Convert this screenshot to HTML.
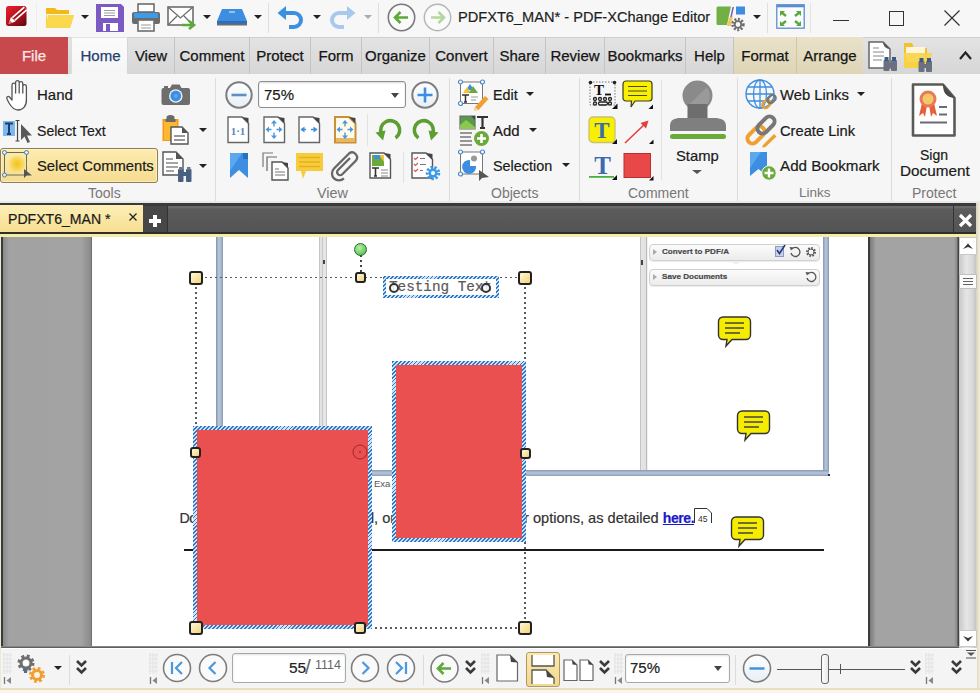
<!DOCTYPE html>
<html><head><meta charset="utf-8">
<style>
*{box-sizing:border-box}
html,body{margin:0;padding:0}
body{width:980px;height:693px;overflow:hidden;position:relative;background:#f4f4f4;font-family:"Liberation Sans",sans-serif;color:#1a1a1a}
.a{position:absolute}
.t{position:absolute;white-space:nowrap;font-size:15px;line-height:18px;-webkit-text-stroke:0.2px currentColor}
svg{position:absolute;overflow:visible}
.dd{position:absolute;width:0;height:0;border-left:4px solid transparent;border-right:4px solid transparent;border-top:4px solid #222}
.tab{position:absolute;top:37px;height:37px;border-right:1px solid #c4c4c4;font-size:15px;line-height:37px;text-align:center;color:#151515;-webkit-text-stroke:0.25px currentColor}
.gl{position:absolute;top:185px;font-size:14px;line-height:16px;color:#777;white-space:nowrap}
.sep{position:absolute;top:78px;width:1px;height:122px;background:#dadada}
</style></head><body>

<!-- TITLE BAR -->
<div class="a" style="left:0;top:0;width:980px;height:37px;background:#f7f7f7"></div>


<!-- title icons -->
<svg style="left:6px;top:6px" width="21" height="20" viewBox="0 0 21 20"><defs><linearGradient id="lg1" x1="0" y1="0" x2="0.8" y2="1"><stop offset="0" stop-color="#e8202c"/><stop offset=".55" stop-color="#b81420"/><stop offset="1" stop-color="#6a0810"/></linearGradient></defs><rect x="0" y="0" width="20.5" height="20" rx="2.5" fill="url(#lg1)"/><path d="M7.5 13 L19.5 2.5" stroke="#fff" stroke-width="5.2" stroke-linecap="butt"/><path d="M7.5 13 L19.5 2.5" stroke="#a01018" stroke-width="1.8"/><path d="M2.5 18 L5 11 L9.5 15.5 Z" fill="#fff"/><path d="M2.5 18 L4 14.5 L6 16.5 Z" fill="#8a1a1a" opacity=".6"/></svg>
<div class="a" style="left:36px;top:3px;width:1px;height:30px;background:#ededed"></div>
<svg style="left:45px;top:6px" width="30" height="23" viewBox="0 0 30 23"><path d="M1 2 L10 2 L12 4 L24 4 L24 8 L1 8 Z" fill="#f2b81c"/><path d="M1 4 L1 22 L25 22 L29 9 L6 9 L3 20 Z" fill="#f7cd3a"/><path d="M3 9 L29 9 L25 22 L0.5 22 Z" fill="#fbd94e"/></svg>
<div class="dd" style="left:81px;top:15px"></div>
<svg style="left:96px;top:4px" width="28" height="28" viewBox="0 0 28 28"><path d="M0 0 H25 L28 3 V28 H0 Z" fill="#7c5ac4"/><rect x="5" y="3" width="17" height="11" fill="#fff"/><path d="M8 6.5 H19 M8 9 H19 M8 11.5 H19" stroke="#9a9aa8" stroke-width="1"/><rect x="7" y="19" width="15" height="8" fill="#fff"/><rect x="10" y="20" width="4" height="7" fill="#7c5ac4"/></svg>
<svg style="left:131px;top:3px" width="30" height="29" viewBox="0 0 30 29"><rect x="7" y="1" width="16" height="8" fill="#fff" stroke="#6d6d6d" stroke-width="1.6"/><rect x="1" y="9" width="28" height="12" rx="2" fill="#6b6b6b"/><rect x="3" y="10" width="24" height="5" fill="#3d9be9"/><rect x="7" y="17" width="16" height="11" fill="#fff" stroke="#6d6d6d" stroke-width="1.6"/><path d="M10 22 H20 M10 25 H20" stroke="#999" stroke-width="1"/></svg>
<svg style="left:167px;top:6px" width="30" height="24" viewBox="0 0 30 24"><rect x="1" y="1" width="25" height="18" fill="#fff" stroke="#6d6d6d" stroke-width="1.6"/><path d="M1 1 L13.5 12 L26 1 M1 19 L10 10 M26 19 L17 10" fill="none" stroke="#6d6d6d" stroke-width="1.3"/><path d="M15 19 H26 M22 15 L27 19 L22 23" fill="none" stroke="#5aaa3a" stroke-width="2.6"/></svg>
<div class="dd" style="left:203px;top:15px"></div>
<svg style="left:216px;top:8px" width="32" height="18" viewBox="0 0 32 18"><path d="M6 1 H26 L31 13 H1 Z" fill="#3d8ee0"/><path d="M1 13 H31 V16 H1 Z" fill="#2a6fbf"/><rect x="1" y="15.5" width="30" height="2" fill="#6d6d6d"/><rect x="13" y="3" width="6" height="2" fill="#8cc4f2"/></svg>
<div class="dd" style="left:254px;top:15px"></div>
<div class="a" style="left:268px;top:3px;width:1px;height:30px;background:#dedede"></div>
<svg style="left:277px;top:5px" width="28" height="24" viewBox="0 0 28 24"><path d="M6 8 H17 A7 7 0 0 1 17 22 H12" fill="none" stroke="#3b91e0" stroke-width="4"/><path d="M0.5 8 L9 1 L9 15 Z" fill="#3b91e0"/></svg>
<div class="dd" style="left:313px;top:15px"></div>
<svg style="left:328px;top:5px" width="28" height="24" viewBox="0 0 28 24"><path d="M22 8 H11 A7 7 0 0 0 11 22 H16" fill="none" stroke="#a8c9ee" stroke-width="4"/><path d="M27.5 8 L19 1 L19 15 Z" fill="#a8c9ee"/></svg>
<div class="dd" style="left:364px;top:15px;border-top-color:#aaa"></div>
<div class="a" style="left:378px;top:3px;width:1px;height:30px;background:#dedede"></div>
<svg style="left:387px;top:3px" width="29" height="29" viewBox="0 0 29 29"><circle cx="14.5" cy="14.5" r="13.2" fill="#fafafa" stroke="#7a7a7a" stroke-width="1.6"/><path d="M8 14.5 H21 M13.5 9 L8 14.5 L13.5 20" fill="none" stroke="#5fa83a" stroke-width="2.6"/></svg>
<svg style="left:423px;top:3px" width="29" height="29" viewBox="0 0 29 29"><circle cx="14.5" cy="14.5" r="13.2" fill="#fafafa" stroke="#b5b5b5" stroke-width="1.4"/><path d="M8 14.5 H21 M15.5 9 L21 14.5 L15.5 20" fill="none" stroke="#b4d79c" stroke-width="2.6"/></svg>
<div class="t" style="left:458px;top:8px;font-size:14.6px;color:#1e1e1e">PDFXT6_MAN* - PDF-XChange Editor</div>
<svg style="left:716px;top:5px" width="31" height="28" viewBox="0 0 31 28"><path d="M2 1.5 H15 L11 20 H2 a1.5 1.5 0 0 1 -1.5 -1.5 V3 A1.5 1.5 0 0 1 2 1.5 Z" fill="#72b046"/><path d="M16.5 2 L18 2 L14 20 L12.5 20 Z" fill="#7a55c0"/><rect x="20" y="1.5" width="9" height="8" fill="#3d8ee0"/><path d="M13 13 L17 11 L15 21 L11 21 Z" fill="#f0c860"/><circle cx="22" cy="19.5" r="5.2" fill="none" stroke="#6d6d6d" stroke-width="3" stroke-dasharray="1.9 1.5"/><circle cx="22" cy="19.5" r="3.3" fill="none" stroke="#6d6d6d" stroke-width="1.8"/></svg>
<div class="dd" style="left:753px;top:15px"></div>
<div class="a" style="left:767px;top:3px;width:1px;height:30px;background:#dedede"></div>
<svg style="left:776px;top:4px" width="29" height="25" viewBox="0 0 29 25"><rect x="0.8" y="0.8" width="27.4" height="23.4" fill="#fbfdff" stroke="#5a8ed0" stroke-width="1.3"/><rect x="0.8" y="0.8" width="27.4" height="2.5" fill="#5a8ed0"/><path d="M5 8 L10 12 M24 8 L19 12 M5 21 L10 17 M24 21 L19 17" stroke="#5aaa3a" stroke-width="2.4"/><path d="M4 7 H9 L4 12 Z M25 7 H20 L25 12 Z M4 22 H9 L4 17 Z M25 22 H20 L25 17 Z" fill="#5aaa3a"/></svg>
<div class="a" style="left:810px;top:3px;width:1px;height:30px;background:#e3e3e3"></div>
<div class="a" style="left:833px;top:20px;width:16px;height:1px;background:#333"></div>
<div class="a" style="left:889px;top:11px;width:15px;height:15px;border:1px solid #333"></div>
<svg style="left:944px;top:10px" width="16" height="16" viewBox="0 0 16 16"><path d="M0.5 0.5 L15.5 15.5 M15.5 0.5 L0.5 15.5" stroke="#333" stroke-width="1.2"/></svg>

<!-- RIBBON TABS -->
<div class="a" style="left:0;top:37px;width:980px;height:37px;background:linear-gradient(#e3e3e3,#d6d6d6);border-top:1px solid #d0d0d0"></div>
<div class="tab" style="left:0;width:68px;background:#c8494b;color:#fbe9e9;border-right:none">File</div>
<div class="tab" style="left:71px;width:57px;background:linear-gradient(#fbfbfb,#f5f5f5);color:#22406e;height:38px;border-right:1px solid #d6d6d6;border-left:1px solid #dedede;border-top:1px solid #e2e2e2;line-height:36px;padding-left:2px">Home</div>
<div class="tab" style="left:128px;width:47px">View</div>
<div class="tab" style="left:175px;width:75px">Comment</div>
<div class="tab" style="left:250px;width:61px">Protect</div>
<div class="tab" style="left:311px;width:51px">Form</div>
<div class="tab" style="left:362px;width:68px">Organize</div>
<div class="tab" style="left:430px;width:64px">Convert</div>
<div class="tab" style="left:494px;width:52px">Share</div>
<div class="tab" style="left:546px;width:59px">Review</div>
<div class="tab" style="left:605px;width:81px">Bookmarks</div>
<div class="tab" style="left:686px;width:48px">Help</div>
<div class="a" style="left:734px;top:37px;width:129px;height:37px;background:linear-gradient(#e9e2c9,#ded5b6)"></div>
<div class="tab" style="left:734px;width:63px;border-right:1px solid #cfc6a6">Format</div>
<div class="tab" style="left:797px;width:66px;border-right:none">Arrange</div>


<!-- tab row right icons -->
<svg style="left:868px;top:41px" width="32" height="31" viewBox="0 0 32 31"><path d="M1 1 H15 L22 8 V27 H1 Z" fill="#fff" stroke="#666" stroke-width="1.5"/><path d="M15 1 C15 5 18 8 22 8 Z" fill="#555"/><path d="M5 7 H11 M5 11 H16 M5 15 H16 M5 19 H14" stroke="#888" stroke-width="1.2"/><rect x="15.5" y="19" width="6" height="11" rx="1" fill="#6a7080"/><rect x="23" y="19" width="6" height="11" rx="1" fill="#6a7080"/><rect x="20" y="22" width="4" height="4" fill="#6a7080"/><rect x="16.5" y="16" width="4" height="4" fill="#3a5a8a"/><rect x="24" y="16" width="4" height="4" fill="#3a5a8a"/></svg>
<svg style="left:903px;top:42px" width="32" height="30" viewBox="0 0 32 30"><path d="M1 3 L1 26 L24 26 L24 6 L11 6 L9 1 L1 1 Z" fill="#f2c030"/><rect x="3" y="5" width="19" height="15" fill="#fff6d8"/><path d="M1 11 H29 L25 26 H1 Z" fill="#f8d448" opacity=".9"/><rect x="15.5" y="19" width="6" height="11" rx="1" fill="#6a7080"/><rect x="23" y="19" width="6" height="11" rx="1" fill="#6a7080"/><rect x="20" y="22" width="4" height="4" fill="#6a7080"/><rect x="16.5" y="16" width="4" height="4" fill="#3a5a8a"/><rect x="24" y="16" width="4" height="4" fill="#3a5a8a"/></svg>
<svg style="left:959px;top:50px" width="13" height="10" viewBox="0 0 13 10"><path d="M1 9 L6.5 2.5 L12 9" fill="none" stroke="#222" stroke-width="2.2"/></svg>

<!-- RIBBON BODY -->
<div class="a" style="left:0;top:74px;width:980px;height:130px;background:#f6f6f6"></div>


<!-- ribbon separators -->
<div class="a" style="left:215px;top:78px;width:1px;height:124px;background:#dcdcdc"></div>
<div class="a" style="left:449px;top:78px;width:1px;height:124px;background:#dcdcdc"></div>
<div class="a" style="left:579px;top:78px;width:1px;height:124px;background:#dcdcdc"></div>
<div class="a" style="left:737px;top:78px;width:1px;height:124px;background:#dcdcdc"></div>
<div class="a" style="left:891px;top:78px;width:1px;height:124px;background:#dcdcdc"></div>
<div class="a" style="left:367px;top:114px;width:1px;height:32px;background:#e2e2e2"></div>
<div class="a" style="left:403px;top:152px;width:1px;height:31px;background:#e2e2e2"></div>
<div class="a" style="left:661px;top:80px;width:1px;height:100px;background:#e2e2e2"></div>
<div class="a" style="left:0;top:201px;width:980px;height:2px;background:#e9e9e9"></div>

<!-- group labels -->
<div class="gl" style="left:88px;top:185px;font-size:14px">Tools</div>
<div class="gl" style="left:317px;top:185px;font-size:14.4px">View</div>
<div class="gl" style="left:491px;top:185px;font-size:14px">Objects</div>
<div class="gl" style="left:628px;top:185px;font-size:14px">Comment</div>
<div class="gl" style="left:799px;top:185px;font-size:13.5px">Links</div>
<div class="gl" style="left:912px;top:185px;font-size:14px">Protect</div>

<!-- tools -->
<div class="a" style="left:0;top:148px;width:158px;height:35px;border:1px solid #8f7c52;border-radius:3px;background:linear-gradient(#fcecb0,#f6dc90);box-shadow:inset 0 0 0 1px rgba(255,250,220,.6)"></div>
<div class="t" style="left:37px;top:86px;font-size:15px">Hand</div>
<div class="t" style="left:37px;top:122px;font-size:14.1px">Select Text</div>
<div class="t" style="left:37px;top:157px;font-size:14.8px">Select Comments</div>

<!-- view: zoom box -->
<div class="a" style="left:258px;top:81px;width:148px;height:27px;border:1px solid #8e8e8e;border-radius:3px;background:#fff;box-shadow:inset 0 1px 2px rgba(0,0,0,.15)"></div>
<div class="t" style="left:264px;top:86px;font-size:15px">75%</div>
<div class="dd" style="left:391px;top:93px;border-top-color:#444;border-left-width:4.5px;border-right-width:4.5px;border-top-width:5px"></div>

<!-- objects -->
<div class="t" style="left:493px;top:86px;font-size:14.3px">Edit</div>
<div class="dd" style="left:526px;top:92px"></div>
<div class="t" style="left:493px;top:122px;font-size:15px">Add</div>
<div class="dd" style="left:529px;top:128px"></div>
<div class="t" style="left:493px;top:157px;font-size:14.4px">Selection</div>
<div class="dd" style="left:562px;top:163px"></div>

<!-- comment -->
<div class="t" style="left:676px;top:147px;font-size:14.8px">Stamp</div>
<div class="dd" style="left:692px;top:170px;border-top-color:#555;border-left-width:5px;border-right-width:5px"></div>

<!-- links -->
<div class="t" style="left:780px;top:86px;font-size:14.8px">Web Links</div>
<div class="dd" style="left:857px;top:92px"></div>
<div class="t" style="left:780px;top:122px;font-size:14.7px">Create Link</div>
<div class="t" style="left:780px;top:157px;font-size:15.2px">Add Bookmark</div>

<!-- protect -->
<div class="t" style="left:920px;top:146px;font-size:14px">Sign</div>
<div class="t" style="left:900px;top:162px;font-size:15.3px">Document</div>


<!-- ribbon icons: tools -->
<svg style="left:6px;top:79px" width="25" height="32" viewBox="0 0 25 32"><path d="M6 17 V6 a1.8 1.8 0 0 1 3.6 0 V14 V3.5 a1.8 1.8 0 0 1 3.6 0 V14 V4.5 a1.8 1.8 0 0 1 3.6 0 V14 V7.5 a1.8 1.8 0 0 1 3.6 0 V20 C20.8 27 17 31 12 31 C8 31 6 29 3 24 L1 20 C0 18 2 16.5 3.5 18 L6 21 Z" fill="#fff" stroke="#555" stroke-width="1.3" stroke-linejoin="round"/></svg>
<svg style="left:2px;top:120px" width="32" height="24" viewBox="0 0 32 24"><rect x="1" y="1" width="12" height="15" fill="#7db8ec"/><path d="M3 3.5 H11 M7 3.5 V14 M5 14 H9" stroke="#1f3f6a" stroke-width="2"/><path d="M15.5 0.5 V21 M13.5 0.5 H17.5 M13.5 21 H17.5" stroke="#444" stroke-width="1.2"/><path d="M19 4 L19 20 L22.5 16.5 L25.5 23 L28 22 L25 15.5 L30 15.5 Z" fill="#5a5a5a"/></svg>
<svg style="left:2px;top:150px" width="31" height="29" viewBox="0 0 31 29"><defs><radialGradient id="yg"><stop offset="0" stop-color="#f3c21a"/><stop offset=".7" stop-color="#f8dc6a"/><stop offset="1" stop-color="#f8e6a0" stop-opacity="0"/></radialGradient></defs><rect x="2.5" y="2.5" width="22" height="22.5" fill="none" stroke="#6a6a5a" stroke-width="1"/><circle cx="15" cy="14" r="10" fill="url(#yg)"/><circle cx="2.5" cy="2.5" r="2" fill="#dfeefa" stroke="#4a7fb0" stroke-width="1"/><circle cx="24.5" cy="2.5" r="2" fill="#dfeefa" stroke="#4a7fb0" stroke-width="1"/><circle cx="2.5" cy="25" r="2" fill="#dfeefa" stroke="#4a7fb0" stroke-width="1"/><path d="M22 19 L22 28 L24.5 25.5 L30 25.5 Z" fill="#555"/></svg>
<svg style="left:161px;top:84px" width="30" height="22" viewBox="0 0 30 22"><rect x="0.5" y="4" width="28.5" height="17" rx="2" fill="#6e6e6e"/><path d="M9 4 L11 0.5 H18.5 L20.5 4 Z" fill="#6e6e6e"/><rect x="3" y="2" width="4" height="3" fill="#6e6e6e"/><circle cx="14.8" cy="12" r="6.8" fill="#e8f3fc"/><circle cx="14.8" cy="12" r="5.4" fill="#3d8ee0"/><circle cx="14.8" cy="12" r="2" fill="#5ba8ef"/></svg>
<svg style="left:162px;top:115px" width="28" height="30" viewBox="0 0 28 30"><rect x="0.5" y="4" width="16" height="22" fill="#f39a18"/><rect x="2" y="6" width="13" height="19" fill="#fbb830"/><path d="M4.5 4.5 V2.5 a4 2.5 0 0 1 8 0 V4.5 Z" fill="#6a6a6a"/><rect x="3.5" y="4" width="10" height="3" fill="#6a6a6a"/><path d="M9 12 H20 L26 18 V29 H9 Z" fill="#fff" stroke="#555" stroke-width="1.4"/><path d="M20 12 V18 H26" fill="#555"/><path d="M12 21 H23 M12 25 H23" stroke="#777" stroke-width="1.4"/></svg>
<div class="dd" style="left:199px;top:128px"></div>
<svg style="left:162px;top:151px" width="31" height="32" viewBox="0 0 31 32"><path d="M1 1 H14 L21 8 V24 H1 Z" fill="#fff" stroke="#555" stroke-width="1.4"/><path d="M14 1 V8 H21" fill="#555"/><path d="M4 8 H11 M4 12 H16 M4 16 H16 M4 20 H12" stroke="#888" stroke-width="1.3"/><rect x="16" y="18" width="5.5" height="13" rx="1" fill="#4a6080"/><rect x="24" y="18" width="5.5" height="13" rx="1" fill="#4a6080"/><rect x="20" y="21" width="5" height="4" fill="#4a6080"/><rect x="17" y="16" width="3.5" height="3" fill="#6a7a90"/><rect x="25" y="16" width="3.5" height="3" fill="#6a7a90"/></svg>
<div class="dd" style="left:199px;top:164px"></div>

<!-- view icons -->
<svg style="left:225px;top:81px" width="28" height="28" viewBox="0 0 28 28"><defs><linearGradient id="cg" x1="0" y1="0" x2="0" y2="1"><stop offset="0" stop-color="#ffffff"/><stop offset="1" stop-color="#e6eef5"/></linearGradient></defs><circle cx="14" cy="14" r="12.7" fill="url(#cg)" stroke="#7d7d7d" stroke-width="2"/><path d="M6.5 14 H21.5" stroke="#5d8fbf" stroke-width="2.6"/></svg>
<svg style="left:411px;top:81px" width="28" height="28" viewBox="0 0 28 28"><circle cx="14" cy="14" r="12.7" fill="url(#cg)" stroke="#7d7d7d" stroke-width="2"/><path d="M6.5 14 H21.5 M14 6.5 V21.5" stroke="#3d8ee0" stroke-width="2.6"/></svg>
<svg style="left:227px;top:116px" width="23" height="28" viewBox="0 0 23 28"><path d="M1 1 H15 L21.5 7.5 V26.5 H1 Z" fill="#fff" stroke="#666" stroke-width="1.4"/><path d="M15 1 L21.5 7.5 L21.5 2 Z" fill="#444"/><text x="11" y="18.5" font-size="11" font-family="Liberation Serif" fill="#5a88b8" text-anchor="middle" font-weight="bold">1·1</text></svg>
<svg style="left:263px;top:116px" width="23" height="28" viewBox="0 0 23 28"><path d="M1 1 H15 L21.5 7.5 V26.5 H1 Z" fill="#fff" stroke="#666" stroke-width="1.4"/><path d="M15 1 L21.5 7.5 L21.5 2 Z" fill="#444"/><path d="M11 6 V10.5 M11 16.5 V21 M4 13.5 H8.5 M13.5 13.5 H18" stroke="#4a98e0" stroke-width="1.4"/><path d="M11 4 L8 7.5 H14 Z M11 23 L8 19.5 H14 Z M2.5 13.5 L6 10.5 V16.5 Z M19.5 13.5 L16 10.5 V16.5 Z" fill="#4a98e0"/></svg>
<svg style="left:298px;top:116px" width="23" height="28" viewBox="0 0 23 28"><path d="M1 1 H15 L21.5 7.5 V26.5 H1 Z" fill="#fff" stroke="#666" stroke-width="1.4"/><path d="M15 1 L21.5 7.5 L21.5 2 Z" fill="#444"/><path d="M3 13.5 H8 M13 13.5 H19" stroke="#3d8ee0" stroke-width="1.3"/><path d="M2.5 13.5 L6.5 10.5 V16.5 Z M19.5 13.5 L15.5 10.5 V16.5 Z" fill="#3d8ee0"/></svg>
<svg style="left:334px;top:116px" width="23" height="28" viewBox="0 0 23 28"><path d="M1 1 H15 L21.5 7.5 V26.5 H1 Z" fill="#fffbe8" stroke="#c8903a" stroke-width="2"/><path d="M15 1 L21.5 7.5 L21.5 2 Z" fill="#444"/><rect x="2" y="22" width="19" height="4" fill="#e8b860"/><path d="M11 6 V10.5 M11 16.5 V21 M4 13.5 H8.5 M13.5 13.5 H18" stroke="#4a98e0" stroke-width="1.4"/><path d="M11 4 L8 7.5 H14 Z M11 23 L8 19.5 H14 Z M2.5 13.5 L6 10.5 V16.5 Z M19.5 13.5 L16 10.5 V16.5 Z" fill="#4a98e0"/></svg>
<svg style="left:374px;top:118px" width="30" height="24" viewBox="0 0 30 24"><path d="M21.6 20 A9.5 9.5 0 1 0 7.5 16" fill="none" stroke="#5c9e32" stroke-width="3.6"/><path d="M1.5 14.5 L11.5 12.5 L9 22.5 Z" fill="#5c9e32"/></svg>
<svg style="left:410px;top:118px" width="30" height="24" viewBox="0 0 30 24"><path d="M8.4 20 A9.5 9.5 0 1 1 22.5 16" fill="none" stroke="#5c9e32" stroke-width="3.6"/><path d="M28.5 14.5 L18.5 12.5 L21 22.5 Z" fill="#5c9e32"/></svg>
<svg style="left:230px;top:153px" width="19" height="26" viewBox="0 0 19 26"><path d="M0 0 H18 V25 L9 17 L0 25 Z" fill="#3d8ee0"/><path d="M0 0 H12 L0 18 Z" fill="#5aa8ef"/><rect x="13" y="0" width="5" height="6" fill="#2a6fbf"/></svg>
<svg style="left:262px;top:152px" width="28" height="29" viewBox="0 0 28 29"><path d="M1 15 V1 H11" fill="none" stroke="#777" stroke-width="1.2"/><path d="M5 19 V5 H15" fill="none" stroke="#666" stroke-width="1.2"/><path d="M10 10 H20 L26 16 V28 H10 Z" fill="#fff" stroke="#555" stroke-width="1.4"/><path d="M20 10 L26 16 V11 Z" fill="#444"/><path d="M13 17 H17 M13 20 H23 M13 23 H23" stroke="#777" stroke-width="1.2"/></svg>
<svg style="left:296px;top:153px" width="28" height="27" viewBox="0 0 28 27"><path d="M0 0 H27 V18 H10 L7 26 L5 18 H0 Z" fill="#f6cc3c"/><path d="M3 4.5 H24 M3 9 H24 M3 13.5 H24" stroke="#e8b020" stroke-width="1.5"/></svg>
<svg style="left:330px;top:152px" width="31" height="27" viewBox="0 0 31 27"><path d="M20 7 L8 19 a3 3 0 0 0 4.3 4.3 L26 9.5 a5 5 0 0 0 -7 -7 L4 17.5 a7 7 0 0 0 9.9 9.9" fill="none" stroke="#666" stroke-width="2.3" transform="translate(0,-1)"/></svg>
<svg style="left:369px;top:152px" width="23" height="27" viewBox="0 0 23 27"><path d="M1 1 H15 L21.5 7.5 V26 H1 Z" fill="#fff" stroke="#555" stroke-width="1.4"/><path d="M15 1 L21.5 7.5 V2 Z" fill="#444"/><rect x="3" y="3" width="12" height="11" fill="#f3c23a"/><path d="M3 3 H10 L15 10 V14 H3 Z" fill="#6aaa3a"/><rect x="5" y="3" width="6" height="4" fill="#3d8ee0"/><path d="M3 16 H10 M6.5 16 V24 M5 24 H8" stroke="#333" stroke-width="1.6"/><path d="M12 18 H19 M12 21 H19 M12 24 H19" stroke="#888" stroke-width="1"/></svg>
<svg style="left:411px;top:152px" width="30" height="29" viewBox="0 0 30 29"><path d="M1 1 H15 L21.5 7.5 V26 H1 Z" fill="#fff" stroke="#555" stroke-width="1.4"/><path d="M15 1 L21.5 7.5 V2 Z" fill="#444"/><path d="M3 6 L4.5 7.5 L7 5 M3 12 L4.5 13.5 L7 11 M3 18 L4.5 19.5 L7 17" fill="none" stroke="#e05050" stroke-width="1.2"/><path d="M9 6.5 H14 M9 12.5 H15 M9 18.5 H12" stroke="#777" stroke-width="1.2"/><circle cx="22" cy="21" r="5.5" fill="none" stroke="#3d9be9" stroke-width="3.5" stroke-dasharray="2.2 1.6"/><circle cx="22" cy="21" r="4.5" fill="#3d9be9"/><circle cx="22" cy="21" r="2" fill="#fff"/></svg>


<!-- objects icons -->
<svg style="left:458px;top:80px" width="32" height="31" viewBox="0 0 32 31"><rect x="2.5" y="2" width="22" height="21.5" fill="#fff" stroke="#777" stroke-width="1"/><path d="M8 10 L12 4 L16 10 Z" fill="#3d8ee0"/><path d="M5 13 L9 7 L13 13 Z" fill="#f3c23a"/><path d="M11 13 L15 6 L20 13 Z" fill="#6aaa3a"/><path d="M4 15 H11 M7.5 15 V22 M6 22 H9" stroke="#333" stroke-width="1.5"/><path d="M13 17 H20 M13 20 H18" stroke="#999" stroke-width="1"/><circle cx="2.5" cy="2" r="2" fill="#fff" stroke="#4a88c4" stroke-width="1.2"/><circle cx="24.5" cy="2" r="2" fill="#fff" stroke="#4a88c4" stroke-width="1.2"/><circle cx="2.5" cy="23.5" r="2" fill="#fff" stroke="#4a88c4" stroke-width="1.2"/><path d="M17 27 L27 16 L30.5 19 L20.5 30 L16 30.5 Z" fill="#f0a030"/><path d="M16 30.5 L17 27 L20.5 30 Z" fill="#f8d8a0"/></svg>
<svg style="left:459px;top:115px" width="31" height="32" viewBox="0 0 31 32"><rect x="1" y="1" width="15" height="13" fill="#5a9a4a"/><path d="M1 1 H16 V14 H1 Z" fill="none" stroke="#6a6a6a" stroke-width="1.2"/><path d="M1 10 L7 5 L16 12 V14 H1 Z" fill="#8cc850"/><path d="M12 1 L16 1 L16 5 Z" fill="#444"/><path d="M18 2 H29 M23.5 2 V13 M21 13 H26" stroke="#333" stroke-width="2.2"/><path d="M1 18 H13 M1 22 H12 M1 26 H13 M1 30 H13" stroke="#777" stroke-width="1.4"/><circle cx="22.5" cy="23.5" r="7.5" fill="#6aaa3a"/><path d="M22.5 19 V28 M18 23.5 H27" stroke="#fff" stroke-width="2.6"/></svg>
<svg style="left:458px;top:150px" width="32" height="32" viewBox="0 0 32 32"><rect x="2.5" y="2" width="22" height="22" fill="#fff" stroke="#777" stroke-width="1"/><circle cx="16" cy="8.5" r="3" fill="#999"/><path d="M12 10 A7 7 0 1 0 18 16 L12 16 Z" fill="#3d8ee0"/><circle cx="2.5" cy="2" r="2" fill="#fff" stroke="#4a88c4" stroke-width="1.2"/><circle cx="24.5" cy="2" r="2" fill="#fff" stroke="#4a88c4" stroke-width="1.2"/><circle cx="2.5" cy="24" r="2" fill="#fff" stroke="#4a88c4" stroke-width="1.2"/><path d="M21 20 L21 31 L24 28 L31 27 Z" fill="#555"/></svg>

<!-- comment icons -->
<svg style="left:589px;top:81px" width="29" height="29" viewBox="0 0 29 29"><rect x="1" y="1" width="25" height="23" fill="none" stroke="#666" stroke-width="0.9" stroke-dasharray="1.5 1.5"/><circle cx="1.5" cy="1.5" r="1.8" fill="#222"/><circle cx="25.5" cy="1.5" r="1.8" fill="#222"/><text x="10" y="14" font-family="Liberation Serif" font-weight="bold" font-size="15" text-anchor="middle" fill="#111">T</text><path d="M16 13.5 H22" stroke="#111" stroke-width="1.8"/><g fill="none" stroke="#222" stroke-width="1.3"><circle cx="6" cy="18" r="1.5"/><circle cx="11" cy="18" r="1.5"/><circle cx="16" cy="18" r="1.5"/><circle cx="21" cy="18" r="1.5"/><circle cx="6" cy="22.5" r="1.5"/><rect x="9.5" y="21" width="9" height="3" rx="1.5"/><circle cx="21" cy="22.5" r="1.5"/></g><path d="M23 28 L28.5 28 L28.5 22.5 Z" fill="#111"/></svg>
<svg style="left:622px;top:80px" width="32" height="30" viewBox="0 0 32 30"><path d="M4 1 H27 a3 3 0 0 1 3 3 V18 a3 3 0 0 1 -3 3 H13 L9 27 L9.5 21 H4 a3 3 0 0 1 -3 -3 V4 a3 3 0 0 1 3 -3 Z" fill="#f8f000" stroke="#3a3a20" stroke-width="1.2"/><path d="M6 6.5 H25 M6 11 H25 M6 15.5 H25" stroke="#4a4a20" stroke-width="1.2"/><path d="M26.5 29 L31 29 L31 24.5 Z" fill="#111"/></svg>
<svg style="left:588px;top:116px" width="30" height="29" viewBox="0 0 30 29"><rect x="1" y="1" width="26" height="25.5" rx="4" fill="#f8f000" stroke="#c9c070" stroke-width="1.3"/><text x="14" y="22" font-family="Liberation Serif" font-weight="bold" font-size="23" text-anchor="middle" fill="#3a6ab0">T</text><path d="M24 28 L29 28 L29 23 Z" fill="#111"/></svg>
<svg style="left:623px;top:119px" width="31" height="26" viewBox="0 0 31 26"><path d="M2 24 L23 4" stroke="#e04040" stroke-width="1.6"/><path d="M25.5 1.5 L17.5 4 L23 9.5 Z" fill="#e04040"/><path d="M26 25 L30.5 25 L30.5 20.5 Z" fill="#111"/></svg>
<svg style="left:588px;top:154px" width="30" height="27" viewBox="0 0 30 27"><text x="14.5" y="20" font-family="Liberation Serif" font-weight="bold" font-size="25" text-anchor="middle" fill="#3a6ab0">T</text><rect x="1" y="22" width="25" height="1.8" fill="#4ab040"/><path d="M24 26 L29 26 L29 21 Z" fill="#111"/></svg>
<svg style="left:623px;top:153px" width="31" height="28" viewBox="0 0 31 28"><rect x="1" y="0.5" width="26.5" height="24" fill="#e84848" stroke="#b83030" stroke-width="1"/><path d="M26 27.5 L30.5 27.5 L30.5 23 Z" fill="#111"/></svg>
<svg style="left:669px;top:80px" width="58" height="60" viewBox="0 0 58 60"><circle cx="28.5" cy="15.5" r="15" fill="#8a8a8a"/><path d="M18.5 26 L38 7 A15 15 0 0 1 28.5 30.5 A15 15 0 0 1 18.5 26 Z" fill="#9a9a9a"/><rect x="18.5" y="24" width="20" height="15" fill="#6e6e6e"/><path d="M1 51 V46 C1 40 5 38 12 38 H45 C52 38 57 40 57 46 V51 Z" fill="#7f7f7f"/><rect x="1" y="54" width="56" height="5" rx="2.5" fill="#6aaa3a"/></svg>

<!-- links icons -->
<svg style="left:745px;top:79px" width="32" height="32" viewBox="0 0 32 32"><circle cx="15" cy="15" r="14" fill="none" stroke="#3d8ee0" stroke-width="1.4"/><ellipse cx="15" cy="15" rx="6.5" ry="14" fill="none" stroke="#3d8ee0" stroke-width="1.3"/><path d="M15 1 V29 M1 15 H29 M3 8 H27 M3 22 H27" stroke="#3d8ee0" stroke-width="1.3"/><rect x="17" y="22" width="9" height="6" rx="3" transform="rotate(-45 21.5 25)" fill="none" stroke="#e8a030" stroke-width="2.5"/><rect x="22" y="17" width="9" height="6" rx="3" transform="rotate(-45 26.5 20)" fill="none" stroke="#777" stroke-width="2.5"/></svg>
<svg style="left:745px;top:115px" width="32" height="32" viewBox="0 0 32 32"><rect x="1" y="15" width="20" height="10" rx="5" transform="rotate(-45 11 20)" fill="none" stroke="#f0a030" stroke-width="4"/><rect x="11" y="5" width="20" height="10" rx="5" transform="rotate(-45 21 10)" fill="none" stroke="#777" stroke-width="4"/><path d="M18 30 L29 19 L31.5 21.5 L20.5 32 L17 32.5 Z" fill="#f0a030"/></svg>
<svg style="left:749px;top:152px" width="28" height="30" viewBox="0 0 28 30"><path d="M1 0 H18 V24 L9.5 17 L1 24 Z" fill="#3d8ee0"/><path d="M1 0 H12 L1 16 Z" fill="#5aa8ef"/><circle cx="20" cy="21" r="7.2" fill="#6aaa3a" stroke="#f4f4f4" stroke-width="1"/><path d="M20 16.5 V25.5 M15.5 21 H24.5" stroke="#fff" stroke-width="2.4"/></svg>

<!-- protect icon -->
<svg style="left:911px;top:83px" width="45" height="54" viewBox="0 0 45 54"><path d="M2 1.5 H32 L43.5 15 V52.5 H2 Z" fill="#fff" stroke="#5a5a5a" stroke-width="2.6" stroke-linejoin="round"/><path d="M32 1.5 C32 10 35 14 43.5 15 Z" fill="#4a4a4a"/><path d="M11 20 L8 33 L12 30 L14 34 L16 22 Z M18 22 L20 34 L22 30 L26 33 L23 20 Z" fill="#e8603a"/><circle cx="17" cy="16" r="8.5" fill="#e87a5a"/><circle cx="17" cy="16" r="5.5" fill="#f3c868"/><path d="M28 24 H36 M28 31.5 H36 M9 39.5 H36" stroke="#6a6a7a" stroke-width="2.2"/></svg>

<!-- DOC TAB BAR -->
<div class="a" style="left:0;top:203px;width:980px;height:31px;background:#3a3a3a"></div>
<div class="a" style="left:0;top:206px;width:977px;height:26px;background:linear-gradient(#6a6a6a 0,#6a6a6a 1.5px,#5c5c5c 3px,#575757 60%,#545454)"></div>
<div class="a" style="left:143px;top:206px;width:25px;height:27px;background:#474747"></div>
<div class="a" style="left:167px;top:206px;width:1px;height:27px;background:#333"></div>
<div class="a" style="left:953px;top:206px;width:1px;height:27px;background:#333"></div>
<div class="a" style="left:0;top:205px;width:143px;height:30px;background:linear-gradient(#fcefb8,#f6dd8c)"></div>
<div class="t" style="left:8px;top:210px;font-size:14.1px;color:#1a1a1a;line-height:18px">PDFXT6_MAN *</div>
<svg style="left:128.5px;top:212.5px" width="8" height="8" viewBox="0 0 8 8"><path d="M0.5 0.5 L7.5 7.5 M7.5 0.5 L0.5 7.5" stroke="#222" stroke-width="1.3"/></svg>
<svg style="left:148px;top:214px" width="14" height="14" viewBox="0 0 14 14"><path d="M7 1 V13 M1 7 H13" stroke="#fff" stroke-width="4"/></svg>
<svg style="left:958px;top:213px" width="15" height="15" viewBox="0 0 15 15"><path d="M2 2 L13 13 M13 2 L2 13" stroke="#fff" stroke-width="3.2"/></svg>
<div class="a" style="left:0;top:232px;width:980px;height:2px;background:#2e2e2e"></div><div class="a" style="left:0;top:234px;width:980px;height:3px;background:#f3eda8"></div>
<div class="a" style="left:976px;top:203px;width:4px;height:490px;background:linear-gradient(90deg,#d8d2b8,#f3efdd)"></div>
<div class="a" style="left:0;top:237px;width:1px;height:456px;background:#efe9d2"></div>

<!-- DOC AREA -->
<div class="a" style="left:1px;top:237px;width:91px;height:411px;background:linear-gradient(90deg,#3a3a3a 0,#3a3a3a 2px,#8a8a8a 2px,#a2a2a2 8px,#a3a3a3 80px,#8a8a8a 90px,#555 91px)"></div>
<div class="a" style="left:868px;top:237px;width:91px;height:411px;background:linear-gradient(90deg,#3a3a3a 0,#3a3a3a 1.5px,#7a7a7a 2px,#a3a3a3 8px,#a3a3a3 86px,#8a8a8a 89px,#444 90px)"></div>
<div class="a" style="left:92px;top:237px;width:776px;height:410px;background:#fff"></div>
<div class="a" style="left:1px;top:646px;width:958px;height:2px;background:linear-gradient(#9a9a9a,#4a4a4a)"></div>
<!-- scrollbar -->
<div class="a" style="left:959px;top:237px;width:17px;height:411px;background:linear-gradient(90deg,#c8c8c8,#e6e6e6 45%,#d8d8d8 80%,#c4c4c4)"></div>
<div class="a" style="left:959px;top:237px;width:18px;height:18px;background:#fff;border:1px solid #c8c8c8"></div>
<svg style="left:962px;top:242px" width="12" height="8" viewBox="0 0 12 8"><path d="M1 7 L6 1.5 L11 7 L6 5 Z" fill="#3a3a3a"/></svg>
<div class="a" style="left:959px;top:274px;width:18px;height:15px;background:#fafafa;border:1px solid #c0c0c0"></div>
<div class="a" style="left:963px;top:278px;width:10px;height:7px;border-top:1px solid #666;border-bottom:1px solid #666"></div>
<div class="a" style="left:963px;top:281px;width:10px;height:1px;background:#666"></div>
<div class="a" style="left:959px;top:630px;width:18px;height:17px;background:#fff;border:1px solid #c8c8c8"></div>
<svg style="left:962px;top:635px" width="12" height="8" viewBox="0 0 12 8"><path d="M1 1 L6 6.5 L11 1 L6 3 Z" fill="#3a3a3a"/></svg>


<!-- PAGE CONTENT -->

<!-- embedded screenshot frame -->
<div class="a" style="left:216px;top:237px;width:7px;height:239px;background:linear-gradient(90deg,#7f93ad,#b9c8dc 40%,#a9bad0 70%,#8799b2)"></div>
<div class="a" style="left:823px;top:237px;width:6px;height:239px;background:linear-gradient(90deg,#8799b2,#b9c8dc 50%,#8799b2)"></div>
<div class="a" style="left:216px;top:470px;width:613px;height:6px;background:linear-gradient(#8799b2,#b9c8dc 50%,#8c9eb6)"></div>
<div class="a" style="left:828px;top:474px;width:2px;height:2px;background:#333"></div>
<div class="a" style="left:319px;top:237px;width:8px;height:233px;background:linear-gradient(90deg,#c4c4c4 0,#c4c4c4 1px,#e2e2e2 1px,#e2e2e2 3px,#c8c8c8 3px,#c8c8c8 4px,#e6e6e6 4px,#e6e6e6 7px,#c4c4c4 7px)"></div>
<div class="a" style="left:323px;top:260px;width:2px;height:4px;background:#444"></div>
<div class="a" style="left:640px;top:237px;width:8px;height:233px;background:linear-gradient(90deg,#c4c4c4 0,#c4c4c4 1px,#e6e6e6 1px,#e0e0e0 6px,#bdbdbd 6px,#bdbdbd 7px,#f0f0f0 7px)"></div>
<div class="a" style="left:641px;top:260px;width:2px;height:5px;background:#444"></div>
<!-- panel items -->
<div class="a" style="left:649px;top:244px;width:171px;height:17px;border:1px solid #d0d0d0;border-radius:4px;background:linear-gradient(#fbfbfb,#ececec);box-shadow:0 1px 1px rgba(0,0,0,.08)"></div>
<div class="dd" style="left:653px;top:249px;border-top:3.5px solid transparent;border-bottom:3.5px solid transparent;border-left:4px solid #aaa;border-right:none"></div>
<div class="t" style="left:662px;top:245px;font-size:8.1px;line-height:14px;font-weight:bold;color:#484848">Convert to PDF/A</div>
<div class="a" style="left:775px;top:246px;width:9px;height:11px;background:#c6d0e6;border:1px solid #8a9ac0"></div>
<svg style="left:775px;top:244px" width="12" height="12" viewBox="0 0 12 12"><path d="M2 6 L4.5 9.5 L10 1" fill="none" stroke="#2a3a7a" stroke-width="1.6"/></svg>
<svg style="left:789px;top:246px" width="12" height="12" viewBox="0 0 12 12"><path d="M3 3 A4.5 4.5 0 1 1 2 7" fill="none" stroke="#555" stroke-width="1.3"/><path d="M0.5 1 L4.5 1.5 L2 4.5 Z" fill="#555"/></svg>
<svg style="left:805px;top:246px" width="12" height="12" viewBox="0 0 12 12"><circle cx="6" cy="6" r="4" fill="none" stroke="#555" stroke-width="2" stroke-dasharray="1.6 1.5"/><circle cx="6" cy="6" r="3" fill="none" stroke="#555" stroke-width="1"/></svg>
<div class="dd" style="left:731px;top:261px;border-top:4px solid #eee;border-left-width:5px;border-right-width:5px"></div>
<div class="a" style="left:649px;top:269px;width:171px;height:17px;border:1px solid #d0d0d0;border-radius:4px;background:linear-gradient(#fbfbfb,#ececec);box-shadow:0 1px 1px rgba(0,0,0,.08)"></div>
<div class="dd" style="left:653px;top:274px;border-top:3.5px solid transparent;border-bottom:3.5px solid transparent;border-left:4px solid #aaa;border-right:none"></div>
<div class="t" style="left:662px;top:270px;font-size:8.1px;line-height:14px;font-weight:bold;color:#484848">Save Documents</div>
<svg style="left:805px;top:271px" width="12" height="12" viewBox="0 0 12 12"><path d="M3 3 A4.5 4.5 0 1 1 2 7" fill="none" stroke="#555" stroke-width="1.3"/><path d="M0.5 1 L4.5 1.5 L2 4.5 Z" fill="#555"/></svg>
<div class="t" style="left:374px;top:478px;font-size:9.5px;line-height:11px;color:#555;-webkit-text-stroke:0">Exa</div>

<!-- comment balloons -->
<svg style="left:718px;top:316px" width="35" height="32" viewBox="0 0 35 32"><path d="M5 1 H28 a4.5 4.5 0 0 1 4.5 4.5 V19 a4.5 4.5 0 0 1 -4.5 4.5 H14 L8 30 L9 23.5 H5 a4.5 4.5 0 0 1 -4.5 -4.5 V5.5 A4.5 4.5 0 0 1 5 1 Z" fill="#f5ec00" stroke="#333" stroke-width="1.4"/><path d="M7 7 H26 M7 12 H26 M7 17 H22" stroke="#444" stroke-width="1.6"/></svg>
<svg style="left:737px;top:410px" width="35" height="32" viewBox="0 0 35 32"><path d="M5 1 H28 a4.5 4.5 0 0 1 4.5 4.5 V19 a4.5 4.5 0 0 1 -4.5 4.5 H14 L8 30 L9 23.5 H5 a4.5 4.5 0 0 1 -4.5 -4.5 V5.5 A4.5 4.5 0 0 1 5 1 Z" fill="#f5ec00" stroke="#333" stroke-width="1.4"/><path d="M7 7 H26 M7 12 H26 M7 17 H22" stroke="#444" stroke-width="1.6"/></svg>
<svg style="left:731px;top:516px" width="35" height="32" viewBox="0 0 35 32"><path d="M5 1 H28 a4.5 4.5 0 0 1 4.5 4.5 V19 a4.5 4.5 0 0 1 -4.5 4.5 H14 L8 30 L9 23.5 H5 a4.5 4.5 0 0 1 -4.5 -4.5 V5.5 A4.5 4.5 0 0 1 5 1 Z" fill="#f5ec00" stroke="#333" stroke-width="1.4"/><path d="M7 7 H26 M7 12 H26 M7 17 H22" stroke="#444" stroke-width="1.6"/></svg>

<!-- page text -->
<div class="t" style="left:179.5px;top:509px;font-size:14.2px;color:#333;letter-spacing:-0.4px">Do</div>
<div class="t" style="left:366px;top:509px;font-size:14.6px;color:#333">d, or</div>
<div class="t" style="left:524px;top:509px;font-size:14.6px;color:#333">r options, as detailed <b style="color:#1a1ac8;text-decoration:underline;font-size:14px;letter-spacing:-0.4px">here.</b></div>
<svg style="left:694px;top:508px" width="20" height="16" viewBox="0 0 20 16"><path d="M0.5 15 V0.5 H13 L17.5 5 V15" fill="none" stroke="#333" stroke-width="1"/><text x="4" y="13.5" font-size="8.5" font-family="Liberation Sans" fill="#333">45</text></svg>
<div class="a" style="left:184px;top:549px;width:640px;height:2px;background:#1a1a1a"></div>

<!-- selection dotted rect -->
<div class="a" style="left:195px;top:276.5px;width:330px;height:1.6px;background:repeating-linear-gradient(90deg,#5a5a5a 0 1.8px,transparent 1.8px 5px)"></div>
<div class="a" style="left:195px;top:627px;width:330px;height:1.6px;background:repeating-linear-gradient(90deg,#5a5a5a 0 1.8px,transparent 1.8px 5px)"></div>
<div class="a" style="left:195px;top:277px;width:1.5px;height:351px;background:repeating-linear-gradient(180deg,#5a5a5a 0 1.8px,transparent 1.8px 5px)"></div>
<div class="a" style="left:524px;top:277px;width:1.5px;height:351px;background:repeating-linear-gradient(180deg,#5a5a5a 0 1.8px,transparent 1.8px 5px)"></div>
<div class="a" style="left:360px;top:255px;width:2px;height:20px;background:repeating-linear-gradient(180deg,#444 0 2px,transparent 2px 5px)"></div>

<!-- rects -->
<div class="a" style="left:392px;top:361px;width:134px;height:181px;background:repeating-linear-gradient(-45deg,#2f78c8 0 1.3px,#cfe3f6 1.3px 2.8px)"></div>
<div class="a" style="left:396px;top:365px;width:126px;height:173px;background:#ea5050"></div>
<div class="a" style="left:193px;top:426px;width:179px;height:203px;background:repeating-linear-gradient(-45deg,#2f78c8 0 1.3px,#cfe3f6 1.3px 2.8px)"></div>
<div class="a" style="left:197px;top:430px;width:171px;height:195px;background:#ea5050"></div>
<svg style="left:352px;top:444px" width="16" height="16" viewBox="0 0 16 16"><circle cx="8" cy="8" r="7" fill="none" stroke="#a02828" stroke-width="1"/><circle cx="8" cy="8" r="1" fill="#a02828"/></svg>

<!-- testing text box -->
<div class="a" style="left:383px;top:276px;width:116px;height:22px;background:repeating-linear-gradient(-45deg,#2f78c8 0 1.3px,#cfe3f6 1.3px 2.8px)"></div>
<div class="a" style="left:386px;top:279px;width:110px;height:16px;background:#fff"></div>
<div class="t" style="left:389px;top:279px;font-family:'Liberation Mono',monospace;font-size:14.3px;line-height:16px;color:#5a5a5a">Testing Text</div>
<div class="a" style="left:389px;top:282.5px;width:10px;height:10px;border-radius:50%;border:2px solid #333;background:rgba(255,255,255,.85)"></div>
<div class="a" style="left:481px;top:282.5px;width:10px;height:10px;border-radius:50%;border:2px solid #333;background:rgba(255,255,255,.85)"></div>

<!-- handles -->
<div class="a" style="left:354px;top:243px;width:13px;height:13px;border-radius:50%;background:radial-gradient(circle at 40% 35%,#b8f0a8,#3cb83c);border:1px solid #2a6a2a"></div>
<div class="a" style="left:188.5px;top:270.5px;width:14px;height:14px;border-radius:3px;border:2px solid #222;background:linear-gradient(135deg,#fff8d8,#f3d47a)"></div>
<div class="a" style="left:355.0px;top:272.0px;width:11px;height:11px;border-radius:3px;border:2px solid #222;background:linear-gradient(135deg,#fff8d8,#f3d47a)"></div>
<div class="a" style="left:517.7px;top:271.0px;width:14px;height:14px;border-radius:3px;border:2px solid #222;background:linear-gradient(135deg,#fff8d8,#f3d47a)"></div>
<div class="a" style="left:190.0px;top:447.0px;width:11px;height:11px;border-radius:3px;border:2px solid #222;background:linear-gradient(135deg,#fff8d8,#f3d47a)"></div>
<div class="a" style="left:519.8px;top:447.5px;width:11px;height:11px;border-radius:3px;border:2px solid #222;background:linear-gradient(135deg,#fff8d8,#f3d47a)"></div>
<div class="a" style="left:188.5px;top:620.5px;width:14px;height:14px;border-radius:3px;border:2px solid #222;background:linear-gradient(135deg,#fff8d8,#f3d47a)"></div>
<div class="a" style="left:354.0px;top:621.5px;width:12px;height:12px;border-radius:3px;border:2px solid #222;background:linear-gradient(135deg,#fff8d8,#f3d47a)"></div>
<div class="a" style="left:517.7px;top:620.5px;width:14px;height:14px;border-radius:3px;border:2px solid #222;background:linear-gradient(135deg,#fff8d8,#f3d47a)"></div>

<!-- STATUS BAR -->
<div class="a" style="left:2px;top:648px;width:975px;height:40px;background:#f4f4f4;border-top:1px solid #fff"></div>
<div class="a" style="left:0;top:688px;width:980px;height:2px;background:#eadfba"></div>
<div class="a" style="left:0;top:690px;width:980px;height:3px;background:#f7f5ee"></div>


<!-- status bar content -->
<svg style="left:2px;top:652px" width="11" height="33" viewBox="0 0 11 33"><g fill="#c8c8c8"><rect x="1" y="1" width="1" height="1"/></g><path d="M2 1 V22 M5 1 V22 M8 1 V22 M1 3 H10 M1 7 H10 M1 11 H10 M1 15 H10 M1 19 H10" stroke="#e2e2e2" stroke-width="1"/><path d="M2.5 25 V32" stroke="#777" stroke-width="1.3"/><path d="M9 25 L4.5 28.5 L9 32 Z" fill="#888"/></svg>
<svg style="left:15px;top:652px" width="32" height="32" viewBox="0 0 32 32"><g transform="translate(11,11)"><circle r="6.5" fill="none" stroke="#6e6e6e" stroke-width="4" stroke-dasharray="2.6 2.5"/><circle r="5" fill="none" stroke="#6e6e6e" stroke-width="3"/><circle r="2.5" fill="#fff"/></g><path d="M9 16 L13 16 L12 21 L9 21 Z" fill="#5a6a8a"/><g transform="translate(22,23)"><circle r="6" fill="none" stroke="#f0a030" stroke-width="4" stroke-dasharray="2.5 2.2"/><circle r="4.5" fill="none" stroke="#f0a030" stroke-width="3"/><circle r="2.2" fill="#fff6d0"/></g></svg>
<div class="dd" style="left:54px;top:666px"></div>
<div class="a" style="left:69px;top:655px;width:1px;height:30px;background:#dcdcdc"></div>
<svg style="left:76px;top:660px" width="11" height="16" viewBox="0 0 11 16"><path d="M1 1 L5.5 5.5 L10 1 M1 8 L5.5 12.5 L10 8" fill="none" stroke="#3a3a3a" stroke-width="2.6"/></svg>

<svg style="left:148px;top:652px" width="11" height="33" viewBox="0 0 11 33"><path d="M2 1 V22 M5 1 V22 M8 1 V22 M1 3 H10 M1 7 H10 M1 11 H10 M1 15 H10 M1 19 H10" stroke="#e2e2e2" stroke-width="1"/><path d="M2.5 25 V32" stroke="#777" stroke-width="1.3"/><path d="M9 25 L4.5 28.5 L9 32 Z" fill="#888"/></svg>
<svg style="left:162px;top:653px" width="30" height="30" viewBox="0 0 30 30"><circle cx="15" cy="15" r="13.5" fill="#fafafa" stroke="#7d7d7d" stroke-width="1.6"/><path d="M10 9 V21 M20 9 L14 15 L20 21" fill="none" stroke="#4a98e0" stroke-width="2.2"/></svg>
<svg style="left:198px;top:653px" width="30" height="30" viewBox="0 0 30 30"><circle cx="15" cy="15" r="13.5" fill="#fafafa" stroke="#7d7d7d" stroke-width="1.6"/><path d="M17.5 9 L11.5 15 L17.5 21" fill="none" stroke="#4a98e0" stroke-width="2.2"/></svg>
<div class="a" style="left:232px;top:653px;width:114px;height:30px;border:1px solid #a8a8a8;border-radius:3px;background:#fff;box-shadow:inset 0 1px 2px rgba(0,0,0,.12)"></div>
<div class="t" style="left:289px;top:659px;font-size:15.5px;color:#222">55</div>
<div class="t" style="left:305px;top:655px;font-size:21px;line-height:24px;color:#666;-webkit-text-stroke:0">/</div>
<div class="t" style="left:315px;top:656px;font-size:12.5px;color:#666;-webkit-text-stroke:0">1114</div>
<svg style="left:350px;top:653px" width="30" height="30" viewBox="0 0 30 30"><circle cx="15" cy="15" r="13.5" fill="#fafafa" stroke="#7d7d7d" stroke-width="1.6"/><path d="M12.5 9 L18.5 15 L12.5 21" fill="none" stroke="#4a98e0" stroke-width="2.2"/></svg>
<svg style="left:386px;top:653px" width="30" height="30" viewBox="0 0 30 30"><circle cx="15" cy="15" r="13.5" fill="#fafafa" stroke="#7d7d7d" stroke-width="1.6"/><path d="M20 9 V21 M10 9 L16 15 L10 21" fill="none" stroke="#4a98e0" stroke-width="2.2"/></svg>
<div class="a" style="left:423px;top:655px;width:1px;height:30px;background:#dcdcdc"></div>
<svg style="left:430px;top:654px" width="30" height="30" viewBox="0 0 30 30"><circle cx="14.5" cy="14.5" r="13.5" fill="#fafafa" stroke="#7d7d7d" stroke-width="1.6"/><path d="M8 14.5 H21 M13.5 9 L8 14.5 L13.5 20" fill="none" stroke="#5fa83a" stroke-width="2.6"/></svg>
<svg style="left:465px;top:660px" width="11" height="16" viewBox="0 0 11 16"><path d="M1 1 L5.5 5.5 L10 1 M1 8 L5.5 12.5 L10 8" fill="none" stroke="#3a3a3a" stroke-width="2.6"/></svg>
<svg style="left:480px;top:652px" width="11" height="33" viewBox="0 0 11 33"><path d="M2 1 V22 M5 1 V22 M8 1 V22 M1 3 H10 M1 7 H10 M1 11 H10 M1 15 H10 M1 19 H10" stroke="#e2e2e2" stroke-width="1"/><path d="M2.5 25 V32" stroke="#777" stroke-width="1.3"/><path d="M9 25 L4.5 28.5 L9 32 Z" fill="#888"/></svg>
<svg style="left:496px;top:654px" width="23" height="28" viewBox="0 0 23 28"><path d="M1 1 H14 L21.5 8.5 V27 H1 Z" fill="#fff" stroke="#666" stroke-width="1.2"/><path d="M14 1 L21.5 8.5 L15 8 Z" fill="#444"/></svg>
<div class="a" style="left:526px;top:652px;width:34px;height:35px;border:1px solid #b09860;border-radius:3px;background:linear-gradient(#fbeab0,#f3d88e)"></div>
<svg style="left:530px;top:655px" width="26" height="29" viewBox="0 0 26 29"><path d="M2 0 V11 H24 V0 Z" fill="#fff"/><path d="M2 0 V11 H24 V0" fill="none" stroke="#555" stroke-width="1.3"/><path d="M2 29 V15 H16 L24 23 V29 Z" fill="#fff"/><path d="M2 29 V15 H16 L24 23 V29" fill="none" stroke="#555" stroke-width="1.3"/><path d="M16 15 L24 23 L17 22 Z" fill="#444"/></svg>
<svg style="left:563px;top:659px" width="32" height="23" viewBox="0 0 32 23"><path d="M1 1 H9 L14 6 V21.5 H1 Z" fill="#fff" stroke="#666" stroke-width="1.2"/><path d="M9 1 L14 6 L9.5 5.5 Z" fill="#444"/><path d="M17 1 H25 L30 6 V21.5 H17 Z" fill="#fff" stroke="#666" stroke-width="1.2"/><path d="M25 1 L30 6 L25.5 5.5 Z" fill="#444"/></svg>
<svg style="left:599px;top:660px" width="11" height="16" viewBox="0 0 11 16"><path d="M1 1 L5.5 5.5 L10 1 M1 8 L5.5 12.5 L10 8" fill="none" stroke="#3a3a3a" stroke-width="2.6"/></svg>
<svg style="left:613px;top:652px" width="11" height="33" viewBox="0 0 11 33"><path d="M2 1 V22 M5 1 V22 M8 1 V22 M1 3 H10 M1 7 H10 M1 11 H10 M1 15 H10 M1 19 H10" stroke="#e2e2e2" stroke-width="1"/><path d="M2.5 25 V32" stroke="#777" stroke-width="1.3"/><path d="M9 25 L4.5 28.5 L9 32 Z" fill="#888"/></svg>
<div class="a" style="left:625px;top:654px;width:105px;height:29px;border:1px solid #a8a8a8;border-radius:3px;background:#fff;box-shadow:inset 0 1px 2px rgba(0,0,0,.12)"></div>
<div class="t" style="left:630px;top:659px;font-size:15px;color:#222">75%</div>
<div class="dd" style="left:714px;top:666px;border-top-color:#444;border-left-width:4.5px;border-right-width:4.5px;border-top-width:5px"></div>
<div class="a" style="left:735px;top:655px;width:1px;height:30px;background:#dcdcdc"></div>
<svg style="left:742px;top:654px" width="30" height="30" viewBox="0 0 30 30"><circle cx="15" cy="14.5" r="13.5" fill="url(#cg)" stroke="#7d7d7d" stroke-width="1.6"/><path d="M7.5 14.5 H22.5" stroke="#3d8ee0" stroke-width="2.4"/></svg>
<div class="a" style="left:777px;top:669px;width:128px;height:1px;background:#555"></div>
<div class="a" style="left:840px;top:664px;width:1px;height:10px;background:#555"></div>
<div class="a" style="left:821px;top:654px;width:8px;height:30px;border:1px solid #666;border-radius:3px;background:linear-gradient(90deg,#fff,#e8e8e8)"></div>
<svg style="left:910px;top:660px" width="11" height="16" viewBox="0 0 11 16"><path d="M1 1 L5.5 5.5 L10 1 M1 8 L5.5 12.5 L10 8" fill="none" stroke="#3a3a3a" stroke-width="2.6"/></svg>
<svg style="left:924px;top:652px" width="11" height="33" viewBox="0 0 11 33"><path d="M2 1 V22 M5 1 V22 M8 1 V22 M1 3 H10 M1 7 H10 M1 11 H10 M1 15 H10 M1 19 H10" stroke="#e2e2e2" stroke-width="1"/><path d="M2.5 25 V32" stroke="#777" stroke-width="1.3"/><path d="M9 25 L4.5 28.5 L9 32 Z" fill="#888"/></svg>
<svg style="left:951px;top:660px" width="11" height="16" viewBox="0 0 11 16"><path d="M1 1 L5.5 5.5 L10 1 M1 8 L5.5 12.5 L10 8" fill="none" stroke="#3a3a3a" stroke-width="2.6"/></svg>
<svg style="left:966px;top:650px" width="10" height="9" viewBox="0 0 10 9"><path d="M0 0.5 H10" stroke="#555" stroke-width="1"/><path d="M1 2.5 L5 6 L9 2.5 Z" fill="#555"/><path d="M0 8 H10" stroke="#555" stroke-width="1"/></svg>

</body></html>
